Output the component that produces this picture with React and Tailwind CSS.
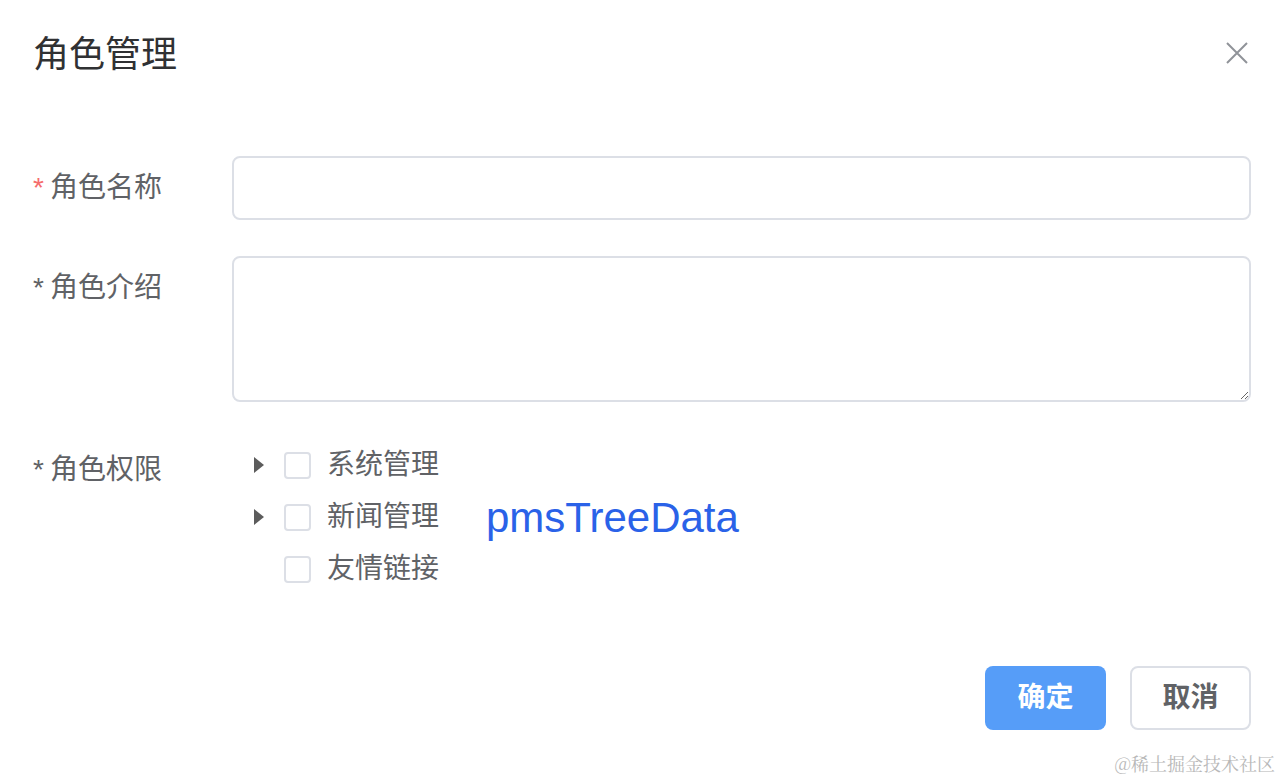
import React, { useState } from 'react';

const FONT = { fontFamily: '"Helvetica Neue", "Liberation Sans", "Noto Sans CJK SC", sans-serif' };

const TREE = [
    { label: '系统管理', children: true },
    { label: '新闻管理', children: true },
    { label: '友情链接', children: false },
];

const Caret = () => (
    <svg width="12" height="18" viewBox="0 0 12 18" className="fill-[#5c5c5c]">
        <path d="M1 1 L11 9 L1 17 Z" />
    </svg>
);

const Label = ({ text, red }) => (
    <div className="w-[199px] shrink-0 text-[28px] leading-[64px] text-[#606266]">
        <span className={red ? 'text-[#f56c6c] mr-[6px]' : 'text-[#606266] mr-[6px]'}>*</span>
        {text}
    </div>
);

export default function App() {
    const [checked, setChecked] = useState({});

    return (
        <div className="w-[1282px] h-[782px] bg-white flex flex-col pl-[33px] pr-[31px]" style={FONT}>
            {/* header */}
            <div className="flex items-center justify-between h-[104px] pt-[2px]">
                <h1 className="text-[36px] text-[#303133] leading-none pt-[4px]">角色管理</h1>
                <button className="w-[24px] h-[24px] mr-[2px] flex items-center justify-center">
                    <svg width="22" height="22" viewBox="0 0 22 22" className="stroke-[#909399]" strokeWidth="2">
                        <path d="M1 1 L21 21 M21 1 L1 21" />
                    </svg>
                </button>
            </div>

            {/* form */}
            <div className="mt-[52px] flex flex-col">
                <div className="flex">
                    <Label text="角色名称" red />
                    <input className="flex-1 h-[64px] border-2 border-[#dcdfe6] rounded-[8px] px-[30px] text-[28px] outline-none" />
                </div>
                <div className="flex mt-[36px]">
                    <Label text="角色介绍" />
                    <textarea className="flex-1 h-[146px] border-2 border-[#dcdfe6] rounded-[8px] px-[30px] py-[10px] text-[28px] outline-none resize-y" />
                </div>
                <div className="flex mt-[36px]">
                    <Label text="角色权限" />
                    <div className="flex flex-col ml-[21px] mt-[1px]">
                        {TREE.map((node, i) => (
                            <div key={node.label} className="flex items-center h-[52px]">
                                <div className="w-[31px] flex items-center">
                                    {node.children && <Caret />}
                                </div>
                                <button
                                    onClick={() => setChecked(prev => ({ ...prev, [i]: !prev[i] }))}
                                    className={`w-[27px] h-[27px] rounded-[4px] border-2 ${checked[i] ? 'bg-[#409eff] border-[#409eff]' : 'bg-white border-[#dcdfe6]'}`}
                                />
                                <span className="ml-[16px] text-[28px] text-[#606266]">{node.label}</span>
                                {i === 1 && (
                                    <span className="ml-[47px] text-[42px] text-[#2a62e8]" style={{ fontFamily: '"Liberation Sans", Arial, sans-serif' }}>
                                        pmsTreeData
                                    </span>
                                )}
                            </div>
                        ))}
                    </div>
                </div>
            </div>

            {/* footer */}
            <div className="flex justify-end gap-[24px] mt-[71px]">
                <button className="w-[121px] h-[64px] rounded-[8px] bg-[#569df8] text-white text-[28px] font-bold">
                    确定
                </button>
                <button className="w-[121px] h-[64px] rounded-[8px] border-2 border-[#dcdfe6] bg-white text-[#606266] text-[28px] font-bold">
                    取消
                </button>
            </div>

            <div className="flex justify-end mt-[20px] -mr-[24px]">
                <span className="text-[18px] text-[#b8b8b8]" style={{ fontFamily: '"Noto Serif CJK SC", "Liberation Serif", "Noto Sans CJK SC", serif' }}>
                    @稀土掘金技术社区
                </span>
            </div>
        </div>
    );
}
